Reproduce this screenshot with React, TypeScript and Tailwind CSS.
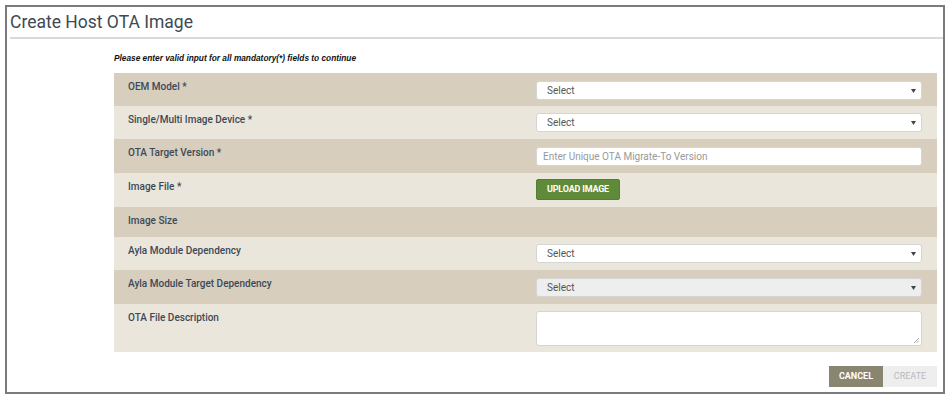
import React from "react";

const Arrow = () => (
  <svg width="5" height="4" viewBox="0 0 5 4" className="absolute right-[5px] top-1/2 -translate-y-1/2">
    <path d="M0 0 L5 0 L2.5 4 Z" fill="#444" />
  </svg>
);

const Select = ({ disabled = false }: { disabled?: boolean }) => (
  <div
    className={`relative h-[19px] rounded-[3px] border border-[#d5d5d5] ${disabled ? "bg-[#eeeeee]" : "bg-white"} flex items-center pl-[10px] text-[10px] text-[#555]`}
  >
    Select
    <Arrow />
  </div>
);

type Row = { label: string; h: string; dark: boolean; field: React.ReactNode };

export default function App() {
  const rows: Row[] = [
    { label: "OEM Model *", h: "h-[33px]", dark: true, field: <div className="pt-[8px]"><Select /></div> },
    { label: "Single/Multi Image Device *", h: "h-[33px]", dark: false, field: <div className="pt-[7px]"><Select /></div> },
    {
      label: "OTA Target Version *",
      h: "h-[34px]",
      dark: true,
      field: (
        <div className="pt-[8px]">
          <div className="h-[19px] rounded-[3px] border border-[#d5d5d5] bg-white flex items-center pl-[6px] text-[10px] text-[#999]">
            Enter Unique OTA Migrate-To Version
          </div>
        </div>
      ),
    },
    {
      label: "Image File *",
      h: "h-[34px]",
      dark: false,
      field: (
        <div className="pt-[6px]">
          <div className="w-[84px] h-[21px] rounded-[2px] bg-[#5f8a3a] border border-[#557d33] flex items-center justify-center text-white text-[9px] font-bold tracking-[-0.2px]">
            UPLOAD IMAGE
          </div>
        </div>
      ),
    },
    { label: "Image Size", h: "h-[30px]", dark: true, field: null },
    { label: "Ayla Module Dependency", h: "h-[33px]", dark: false, field: <div className="pt-[7px]"><Select /></div> },
    { label: "Ayla Module Target Dependency", h: "h-[34px]", dark: true, field: <div className="pt-[8px]"><Select disabled /></div> },
    {
      label: "OTA File Description",
      h: "h-[48px]",
      dark: false,
      field: (
        <div className="pt-[7px]">
          <div className="relative h-[35px] rounded-[3px] border border-[#d5d5d5] bg-white">
            <svg width="6" height="6" viewBox="0 0 6 6" className="absolute right-[2px] bottom-[2px]">
              <path d="M1 6 L6 1 M3.5 6 L6 3.5" stroke="#999" strokeWidth="0.8" />
            </svg>
          </div>
        </div>
      ),
    },
  ];

  return (
    <div className="w-[951px] h-[399px] bg-white p-[5px]" style={{ fontFamily: "Roboto, 'Liberation Sans', sans-serif" }}>
      <div className="w-[940px] h-[389px] border-2 border-[#7b7b7b] flex flex-col">
        <div className="pl-[3px] h-[30px] flex items-center text-[17.5px] text-[#3e4954] leading-none pt-[1px]">
          Create Host OTA Image
        </div>
        <div className="ml-[3px] h-[2px] bg-[#d9d9d9]" />
        <div className="ml-[107px] mr-[6px] flex flex-col">
          <div
            className="h-[34px] flex items-center text-[8.3px] font-bold italic text-[#111] pt-[4px]"
            style={{ fontFamily: "'Liberation Sans', Arial, sans-serif" }}
          >
            Please enter valid input for all mandatory(*) fields to continue
          </div>
          <div className="flex flex-col">
            {rows.map((r) => (
              <div key={r.label} className={`${r.h} flex ${r.dark ? "bg-[#d7cebe]" : "bg-[#ebe6dc]"}`}>
                <div className="w-[422px] pl-[14px] pt-[8px] text-[10px] font-medium text-[#3d4956] leading-[12px]">
                  {r.label}
                </div>
                <div className="flex-1 pr-[15px]">{r.field}</div>
              </div>
            ))}
          </div>
          <div className="flex justify-end mt-[14px]">
            <div className="w-[54px] h-[21px] bg-[#8a8570] text-white text-[9px] font-bold flex items-center justify-center">
              CANCEL
            </div>
            <div className="w-[54px] h-[21px] bg-[#eeeeee] text-[#b9b9b9] text-[9px] flex items-center justify-center">
              CREATE
            </div>
          </div>
        </div>
      </div>
    </div>
  );
}
